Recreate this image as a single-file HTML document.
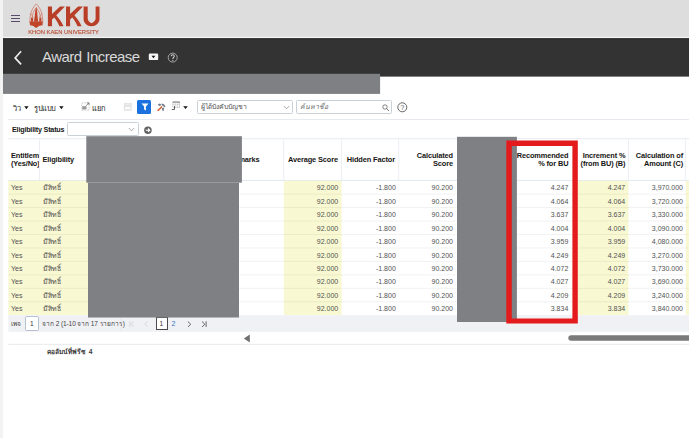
<!DOCTYPE html>
<html><head><meta charset="utf-8">
<style>
*{margin:0;padding:0;box-sizing:border-box}
html,body{width:689px;height:438px;overflow:hidden;background:#fff;font-family:"Liberation Sans",sans-serif}
.a{position:absolute}
.ham{left:10.5px;width:9.8px;height:1.1px;background:#5b4b6b}
.title{left:42px;top:48px;color:#d9d9d9;font-size:15px;letter-spacing:-0.52px;word-spacing:1px;white-space:nowrap}
.tb{font-size:7.5px;color:#262626;white-space:nowrap}
.hd{font-weight:bold;font-size:7.4px;color:#161513;line-height:8.4px;white-space:nowrap;letter-spacing:-0.12px}
.r{text-align:right}
.cell{font-size:7px;color:#525252;white-space:nowrap;line-height:8px}
</style></head><body>
<svg class="a" style="left:0;top:0" width="689" height="438" viewBox="0 0 689 438">
<rect x="0.00" y="0.00" width="3.00" height="438.00" fill="#f3f3f3"/>
<rect x="3.00" y="0.00" width="686.00" height="36.90" fill="#dddddd"/>
<rect x="3.00" y="36.90" width="686.00" height="1.40" fill="#f4f4f4"/>
<rect x="3.00" y="38.30" width="686.00" height="38.30" fill="#333333"/>
<rect x="3.00" y="38.30" width="686.00" height="1.00" fill="#262626"/>
<rect x="8.20" y="119.00" width="680.80" height="1.00" fill="#e6e9ee"/>
<rect x="8.30" y="138.20" width="680.70" height="1.10" fill="#e9edf1"/>
<rect x="8.30" y="179.90" width="680.70" height="1.00" fill="#e3e8ee"/>
<rect x="8.30" y="180.90" width="79.90" height="134.35" fill="#f8f8d2"/>
<rect x="283.80" y="180.90" width="57.80" height="134.35" fill="#f8f8d2"/>
<rect x="578.00" y="180.90" width="50.40" height="134.35" fill="#f8f8d2"/>
<rect x="685.80" y="180.90" width="3.20" height="134.35" fill="#f8f8d2"/>
<rect x="39.00" y="139.30" width="1.00" height="40.60" fill="#ebeef2"/>
<rect x="283.20" y="139.30" width="1.00" height="40.60" fill="#ebeef2"/>
<rect x="340.90" y="139.30" width="1.00" height="40.60" fill="#ebeef2"/>
<rect x="398.20" y="139.30" width="1.00" height="40.60" fill="#ebeef2"/>
<rect x="628.00" y="139.30" width="1.00" height="40.60" fill="#ebeef2"/>
<rect x="684.80" y="139.30" width="1.00" height="40.60" fill="#ebeef2"/>
<rect x="8.30" y="193.61" width="680.70" height="1.00" fill="#000" fill-opacity="0.055"/>
<rect x="8.30" y="207.07" width="680.70" height="1.00" fill="#000" fill-opacity="0.055"/>
<rect x="8.30" y="220.53" width="680.70" height="1.00" fill="#000" fill-opacity="0.055"/>
<rect x="8.30" y="233.99" width="680.70" height="1.00" fill="#000" fill-opacity="0.055"/>
<rect x="8.30" y="247.45" width="680.70" height="1.00" fill="#000" fill-opacity="0.055"/>
<rect x="8.30" y="260.91" width="680.70" height="1.00" fill="#000" fill-opacity="0.055"/>
<rect x="8.30" y="274.37" width="680.70" height="1.00" fill="#000" fill-opacity="0.055"/>
<rect x="8.30" y="287.83" width="680.70" height="1.00" fill="#000" fill-opacity="0.055"/>
<rect x="8.30" y="301.29" width="680.70" height="1.00" fill="#000" fill-opacity="0.055"/>
<rect x="8.30" y="315.25" width="680.70" height="16.55" fill="#f0f1f5"/>
<rect x="120.60" y="315.50" width="0.80" height="16.00" fill="#e2e5ea"/>
<rect x="8.30" y="343.80" width="680.70" height="1.00" fill="#e6e9ee"/>
<rect x="568.3" y="335.2" width="130" height="5.5" rx="2.75" fill="#7a7a7a"/>
<path d="M249.8 334.4 V342.5 L243.8 338.45 Z" fill="#707070"/>
</svg>
<div class="a ham" style="top:14.6px"></div>
<div class="a ham" style="top:18px"></div>
<div class="a ham" style="top:21.2px"></div>
<svg class="a" style="left:0;top:0;will-change:transform" width="110" height="38" viewBox="0 0 110 38">
  <g fill="none" stroke="#cf6a55" stroke-width="0.7">
    <path d="M36.3 3.9 C32.3 8 29.8 13 29.8 23"/>
    <path d="M36.3 3.9 C40.3 8 42.8 13 42.8 23"/>
    <path d="M36.3 7.8 C33.8 10.5 32.2 14 32.2 19"/>
    <path d="M36.3 7.8 C38.8 10.5 40.4 14 40.4 19"/>
    <path d="M30.3 13.5 C32 14.5 33 16.5 33.2 19.5"/>
    <path d="M42.3 13.5 C40.6 14.5 39.6 16.5 39.4 19.5"/>
  </g>
  <g fill="#bf4429">
    <path d="M36.2 6.5 C36.8 9 37.3 12 37.4 14 C37.6 17 37.9 19 38.2 21.8 L34 21.8 C34.3 19 34.7 17 34.9 14 C35.1 12 35.6 9 36.2 6.5 Z"/>
    <path d="M31.1 17.3 C31.8 17.6 32.6 18.2 33 19 L33.2 21.8 L30.9 21.8 Z"/>
    <path d="M41.3 17.3 C40.6 17.6 39.8 18.2 39.4 19 L39.2 21.8 L41.5 21.8 Z"/>
    <path d="M29.8 21.5 L42.7 21.5 L42.6 25.3 L39.5 25.8 L36.1 27.9 L32.9 25.8 L29.9 25.3 Z"/>
  </g>
  <g fill="#b93e27">
    <path d="M47.9 6.5 H52 V14 L60 6.5 H64.9 L56.3 15.3 C59 18.5 61.5 21.5 63.5 26.2 H59.4 C57.8 22.5 56 19.8 54.2 17.5 L52 19.6 V26.2 H47.9 Z"/>
    <path d="M66 6.5 H70.1 V14 L78.1 6.5 H83 L74.4 15.3 C77.1 18.5 79.6 21.5 81.6 26.2 H77.5 C75.9 22.5 74.1 19.8 72.3 17.5 L70.1 19.6 V26.2 H66 Z"/>
    <path d="M83.6 6.5 H87.7 V18.5 C87.7 20.5 89.5 22.5 91.5 23.2 C93.5 22.5 95.6 20.5 95.6 18.5 V6.5 H99.5 V19 C99.5 23 96 26.2 91.5 26.2 C87 26.2 83.6 23 83.6 19 Z"/>
  </g>
  <text x="28.2" y="34.2" font-family="Liberation Sans" font-size="5.9" fill="#b9472f" stroke="#b9472f" stroke-width="0.12" textLength="70.8" lengthAdjust="spacingAndGlyphs">KHON KAEN UNIVERSITY</text>
</svg>
<svg class="a" style="left:13px;top:50px" width="11" height="16" viewBox="0 0 11 16"><path d="M8.1 1.3 L2.1 7.9 L8.1 14.4" stroke="#f0f0f0" stroke-width="1.6" fill="none"/></svg>
<div class="a title">Award Increase</div>
<svg class="a" style="left:140px;top:48px" width="45" height="18" viewBox="140 48 45 18"><rect x="148.8" y="53.6" width="9.4" height="6.5" rx="1.2" fill="#f6f6f6"/><path d="M151.6 55.7 H155.3 L153.45 58.2 Z" fill="#111"/><circle cx="172.7" cy="57.6" r="4.5" stroke="#c8c8c8" stroke-width="0.75" fill="none"/><path d="M171.2 56.2 C171.2 54.3 174.3 54.3 174.3 56.2 C174.3 57.3 172.8 57.5 172.8 59" stroke="#d0d0d0" stroke-width="1.05" fill="none"/><circle cx="172.8" cy="60.4" r="0.6" fill="#c8c8c8"/></svg>

<div class="a tb" style="left:13px;top:101.8px">วิว</div>
<svg class="a" style="left:24.3px;top:105.7px" width="5" height="4" viewBox="0 0 5 4"><path d="M0.2 0.3 H4.6 L2.4 3.3Z" fill="#161513"/></svg>
<div class="a tb" style="left:34px;top:101.8px;letter-spacing:-0.4px">รูปแบบ</div>
<svg class="a" style="left:58.7px;top:105.7px" width="5" height="4" viewBox="0 0 5 4"><path d="M0.2 0.3 H4.6 L2.4 3.3Z" fill="#161513"/></svg>
<svg class="a" style="left:80.5px;top:102.3px" width="9" height="9" viewBox="0 0 9 9"><rect x="0.9" y="0.9" width="7.2" height="7.2" fill="none" stroke="#b5b5b5" stroke-width="0.7" stroke-dasharray="1 0.6"/><rect x="1.2" y="4.2" width="4.3" height="3.2" fill="#9a9a9a"/><path d="M4.8 4 L8 0.9 M6 0.9 H8 V2.9" stroke="#777" stroke-width="0.8" fill="none"/></svg>
<div class="a tb" style="left:92px;top:101.8px;color:#222">แยก</div>
<svg class="a" style="left:122px;top:101px" width="12" height="12" viewBox="122 101 12 12"><path d="M123.9 103.6 Q123.9 102.9 124.6 102.9 H131 Q131.7 102.9 131.7 103.6 V110.7 H123.9 Z" fill="#e2e2e2"/><rect x="125" y="106.8" width="5.6" height="2.6" fill="#fbfbfb"/><rect x="125.2" y="103.6" width="5.2" height="1.6" fill="#ececec"/></svg>
<div class="a" style="left:137.1px;top:99.7px;width:14.2px;height:14.3px;background:#1b72df;border-radius:1.5px"></div>
<svg class="a" style="left:140.5px;top:103px" width="8" height="8" viewBox="0 0 8 8"><path d="M0.5 0.4 H7.5 L4.9 3.6 V7.4 L3.1 6.6 V3.6 Z" fill="#fff"/></svg>
<svg class="a" style="left:156.5px;top:102.5px" width="9" height="8.5" viewBox="0 0 9 8.5"><path d="M0.6 1.8 L2.6 0.5 L4.2 1.5 L3 3.2 Z" fill="#6f7d8c"/><path d="M4.6 0.6 C6.2 0.6 7.8 1.6 8.5 3.6 L7.2 4.2 C6.5 3 5.6 2.3 4.6 2.2 Z" fill="#6f7d8c"/><path d="M4.8 5 L7.2 4.6 L6.8 8 L5.2 7.6 Z" fill="#7a8593"/><path d="M1 7.6 L4.6 3.9" stroke="#d8652a" stroke-width="1.5" stroke-linecap="round"/></svg>
<svg class="a" style="left:168px;top:99px" width="16" height="14" viewBox="168 99 16 14"><rect x="172.9" y="102" width="6.8" height="5.4" fill="none" stroke="#b8b8b8" stroke-width="0.6"/><path d="M172.7 102.1 H179.9" stroke="#6c6c6c" stroke-width="0.9"/><path d="M175.2 102.4 V107.4 M177.5 102.4 V107.4 M172.9 104.7 H179.7" stroke="#c4c4c4" stroke-width="0.55"/><path d="M174.5 106 V109.5 H171.8" stroke="#5a5a5a" stroke-width="0.95" fill="none"/></svg>
<svg class="a" style="left:183px;top:105.9px" width="5" height="4" viewBox="0 0 5 4"><path d="M0.2 0.3 H4.8 L2.5 3.1Z" fill="#161513"/></svg>
<div class="a" style="left:197px;top:99.8px;width:95.5px;height:14.4px;border:1px solid #c9d0d6;border-radius:1.5px;background:#fff"></div>
<div class="a tb" style="left:200.5px;top:101.2px;color:#555;font-size:6.9px">ผู้ได้บังคับบัญชา</div>
<svg class="a" style="left:283px;top:104.5px" width="7" height="5" viewBox="0 0 7 5"><path d="M0.8 1 L3.5 3.8 L6.2 1" stroke="#888" stroke-width="0.7" fill="none"/></svg>
<div class="a" style="left:296px;top:99.8px;width:96px;height:14.4px;border:1px solid #c9d0d6;border-radius:1.5px;background:#fff"></div>
<div class="a tb" style="left:299.5px;top:101.2px;color:#666;font-size:6.9px;font-style:italic">ค้นหาชื่อ</div>
<svg class="a" style="left:382px;top:103.5px" width="8" height="8" viewBox="0 0 8 8"><circle cx="3" cy="3" r="2.2" stroke="#666" stroke-width="0.8" fill="none"/><path d="M4.6 4.6 L7 7" stroke="#666" stroke-width="0.9"/></svg>
<svg class="a" style="left:396.5px;top:101.7px" width="11" height="11" viewBox="0 0 11 11"><circle cx="5.3" cy="5.3" r="4.5" stroke="#555" stroke-width="0.9" fill="none"/><text x="5.3" y="7.9" font-size="6.8" text-anchor="middle" fill="#555" font-family="Liberation Sans">?</text></svg>

<div class="a hd" style="left:12px;top:125.5px;font-size:7.2px;letter-spacing:-0.2px">Eligibility Status</div>
<div class="a" style="left:67px;top:122.4px;width:72px;height:14px;border:1px solid #c9d0d6;border-radius:1.5px;background:#fff"></div>
<svg class="a" style="left:128px;top:127px" width="7" height="5" viewBox="0 0 7 5"><path d="M0.8 1 L3.5 3.8 L6.2 1" stroke="#888" stroke-width="0.7" fill="none"/></svg>
<svg class="a" style="left:140px;top:122px" width="16" height="16" viewBox="140 122 16 16"><circle cx="147.9" cy="130.2" r="3.75" fill="#626262"/><path d="M145.7 130.2 H149.6 M148 128.5 L149.8 130.2 L148 131.9" stroke="#fff" stroke-width="1.1" fill="none"/></svg>

<div class="a cell" style="left:11px;top:184.25px">Yes</div>
<div class="a cell" style="left:42.5px;top:184.25px">มีสิทธิ์</div>
<div class="a cell r" style="left:290px;top:184.25px;width:48.2px">92.000</div>
<div class="a cell r" style="left:350px;top:184.25px;width:45.8px">-1.800</div>
<div class="a cell r" style="left:400px;top:184.25px;width:53px">90.200</div>
<div class="a cell r" style="left:520px;top:184.25px;width:48.3px">4.247</div>
<div class="a cell r" style="left:580px;top:184.25px;width:45.2px">4.247</div>
<div class="a cell r" style="left:630px;top:184.25px;width:53px">3,970.000</div>
<div class="a cell" style="left:11px;top:197.71px">Yes</div>
<div class="a cell" style="left:42.5px;top:197.71px">มีสิทธิ์</div>
<div class="a cell r" style="left:290px;top:197.71px;width:48.2px">92.000</div>
<div class="a cell r" style="left:350px;top:197.71px;width:45.8px">-1.800</div>
<div class="a cell r" style="left:400px;top:197.71px;width:53px">90.200</div>
<div class="a cell r" style="left:520px;top:197.71px;width:48.3px">4.064</div>
<div class="a cell r" style="left:580px;top:197.71px;width:45.2px">4.064</div>
<div class="a cell r" style="left:630px;top:197.71px;width:53px">3,720.000</div>
<div class="a cell" style="left:11px;top:211.17px">Yes</div>
<div class="a cell" style="left:42.5px;top:211.17px">มีสิทธิ์</div>
<div class="a cell r" style="left:290px;top:211.17px;width:48.2px">92.000</div>
<div class="a cell r" style="left:350px;top:211.17px;width:45.8px">-1.800</div>
<div class="a cell r" style="left:400px;top:211.17px;width:53px">90.200</div>
<div class="a cell r" style="left:520px;top:211.17px;width:48.3px">3.637</div>
<div class="a cell r" style="left:580px;top:211.17px;width:45.2px">3.637</div>
<div class="a cell r" style="left:630px;top:211.17px;width:53px">3,330.000</div>
<div class="a cell" style="left:11px;top:224.63px">Yes</div>
<div class="a cell" style="left:42.5px;top:224.63px">มีสิทธิ์</div>
<div class="a cell r" style="left:290px;top:224.63px;width:48.2px">92.000</div>
<div class="a cell r" style="left:350px;top:224.63px;width:45.8px">-1.800</div>
<div class="a cell r" style="left:400px;top:224.63px;width:53px">90.200</div>
<div class="a cell r" style="left:520px;top:224.63px;width:48.3px">4.004</div>
<div class="a cell r" style="left:580px;top:224.63px;width:45.2px">4.004</div>
<div class="a cell r" style="left:630px;top:224.63px;width:53px">3,090.000</div>
<div class="a cell" style="left:11px;top:238.09px">Yes</div>
<div class="a cell" style="left:42.5px;top:238.09px">มีสิทธิ์</div>
<div class="a cell r" style="left:290px;top:238.09px;width:48.2px">92.000</div>
<div class="a cell r" style="left:350px;top:238.09px;width:45.8px">-1.800</div>
<div class="a cell r" style="left:400px;top:238.09px;width:53px">90.200</div>
<div class="a cell r" style="left:520px;top:238.09px;width:48.3px">3.959</div>
<div class="a cell r" style="left:580px;top:238.09px;width:45.2px">3.959</div>
<div class="a cell r" style="left:630px;top:238.09px;width:53px">4,080.000</div>
<div class="a cell" style="left:11px;top:251.55px">Yes</div>
<div class="a cell" style="left:42.5px;top:251.55px">มีสิทธิ์</div>
<div class="a cell r" style="left:290px;top:251.55px;width:48.2px">92.000</div>
<div class="a cell r" style="left:350px;top:251.55px;width:45.8px">-1.800</div>
<div class="a cell r" style="left:400px;top:251.55px;width:53px">90.200</div>
<div class="a cell r" style="left:520px;top:251.55px;width:48.3px">4.249</div>
<div class="a cell r" style="left:580px;top:251.55px;width:45.2px">4.249</div>
<div class="a cell r" style="left:630px;top:251.55px;width:53px">3,270.000</div>
<div class="a cell" style="left:11px;top:265.01px">Yes</div>
<div class="a cell" style="left:42.5px;top:265.01px">มีสิทธิ์</div>
<div class="a cell r" style="left:290px;top:265.01px;width:48.2px">92.000</div>
<div class="a cell r" style="left:350px;top:265.01px;width:45.8px">-1.800</div>
<div class="a cell r" style="left:400px;top:265.01px;width:53px">90.200</div>
<div class="a cell r" style="left:520px;top:265.01px;width:48.3px">4.072</div>
<div class="a cell r" style="left:580px;top:265.01px;width:45.2px">4.072</div>
<div class="a cell r" style="left:630px;top:265.01px;width:53px">3,730.000</div>
<div class="a cell" style="left:11px;top:278.47px">Yes</div>
<div class="a cell" style="left:42.5px;top:278.47px">มีสิทธิ์</div>
<div class="a cell r" style="left:290px;top:278.47px;width:48.2px">92.000</div>
<div class="a cell r" style="left:350px;top:278.47px;width:45.8px">-1.800</div>
<div class="a cell r" style="left:400px;top:278.47px;width:53px">90.200</div>
<div class="a cell r" style="left:520px;top:278.47px;width:48.3px">4.027</div>
<div class="a cell r" style="left:580px;top:278.47px;width:45.2px">4.027</div>
<div class="a cell r" style="left:630px;top:278.47px;width:53px">3,690.000</div>
<div class="a cell" style="left:11px;top:291.93px">Yes</div>
<div class="a cell" style="left:42.5px;top:291.93px">มีสิทธิ์</div>
<div class="a cell r" style="left:290px;top:291.93px;width:48.2px">92.000</div>
<div class="a cell r" style="left:350px;top:291.93px;width:45.8px">-1.800</div>
<div class="a cell r" style="left:400px;top:291.93px;width:53px">90.200</div>
<div class="a cell r" style="left:520px;top:291.93px;width:48.3px">4.209</div>
<div class="a cell r" style="left:580px;top:291.93px;width:45.2px">4.209</div>
<div class="a cell r" style="left:630px;top:291.93px;width:53px">3,240.000</div>
<div class="a cell" style="left:11px;top:305.39px">Yes</div>
<div class="a cell" style="left:42.5px;top:305.39px">มีสิทธิ์</div>
<div class="a cell r" style="left:290px;top:305.39px;width:48.2px">92.000</div>
<div class="a cell r" style="left:350px;top:305.39px;width:45.8px">-1.800</div>
<div class="a cell r" style="left:400px;top:305.39px;width:53px">90.200</div>
<div class="a cell r" style="left:520px;top:305.39px;width:48.3px">3.834</div>
<div class="a cell r" style="left:580px;top:305.39px;width:45.2px">3.834</div>
<div class="a cell r" style="left:630px;top:305.39px;width:53px">3,840.000</div>

<div class="a hd" style="left:11px;top:151.8px;width:28.4px;overflow:hidden">Entitlement<br>(Yes/No)</div>
<div class="a hd" style="left:42.5px;top:156px">Eligibility</div>
<div class="a hd" style="left:220px;top:156px;width:39.6px;text-align:right">Remarks</div>
<div class="a hd" style="left:288px;top:156px">Average Score</div>
<div class="a hd" style="left:346.8px;top:156px">Hidden Factor</div>
<div class="a hd" style="left:398px;top:151.8px;width:55px;text-align:right">Calculated<br>Score</div>
<div class="a hd" style="left:500px;top:151.8px;width:68.4px;text-align:right">Recommended<br>% for BU</div>
<div class="a hd" style="left:570px;top:151.8px;width:55.4px;text-align:right">Increment %<br>(from BU) (B)</div>
<div class="a hd" style="left:628px;top:151.8px;width:55px;text-align:right">Calculation of<br>Amount (C)</div>

<div class="a cell" style="left:10.8px;top:319.6px;color:#444;font-size:6.6px">เพจ</div>
<div class="a" style="left:24.8px;top:316.4px;width:14.3px;height:14.4px;border:1px solid #b3c1ce;border-radius:1.5px;background:#fff"></div>
<div class="a cell" style="left:30px;top:319.8px;color:#333;font-size:6.6px">1</div>
<div class="a cell" style="left:42.3px;top:319.8px;color:#444;font-size:6.6px;letter-spacing:-0.12px">จาก 2 (1-10 จาก 17 รายการ)</div>
<svg class="a" style="left:128.5px;top:320.7px" width="6" height="6.5" viewBox="0 0 6 6.5"><path d="M0.9 0.3 V6.2 M4.9 0.5 L2 3.25 L4.9 6" stroke="#cfcfcf" stroke-width="0.8" fill="none"/></svg>
<svg class="a" style="left:143.8px;top:320.7px" width="4.5" height="6.5" viewBox="0 0 4.5 6.5"><path d="M3.6 0.5 L0.8 3.25 L3.6 6" stroke="#cfcfcf" stroke-width="0.8" fill="none"/></svg>
<div class="a" style="left:155.5px;top:317.3px;width:12.1px;height:12.4px;border:0.9px solid #4a4a4a;background:#fff"></div>
<div class="a cell" style="left:159.6px;top:319.6px;color:#333;font-size:6.6px">1</div>
<div class="a cell" style="left:171.4px;top:320.3px;color:#2f78c4;font-size:7px">2</div>
<svg class="a" style="left:186.8px;top:320.7px" width="4.5" height="6.5" viewBox="0 0 4.5 6.5"><path d="M0.9 0.5 L3.7 3.25 L0.9 6" stroke="#4c4c4c" stroke-width="0.85" fill="none"/></svg>
<svg class="a" style="left:201.2px;top:320.7px" width="6" height="6.5" viewBox="0 0 6 6.5"><path d="M5.1 0.3 V6.2 M1 0.5 L3.9 3.25 L1 6" stroke="#4c4c4c" stroke-width="0.85" fill="none"/></svg>
<div class="a hd" style="left:47px;top:348.4px;font-size:6.6px;color:#3a3a3a;letter-spacing:0">คอลัมน์ที่ฟรีซ&nbsp; 4</div>

<svg class="a" style="left:0;top:0" width="689" height="438" viewBox="0 0 689 438">
<rect x="3.00" y="73.80" width="377.10" height="20.10" fill="#7f8084"/>
<rect x="86.30" y="136.20" width="155.60" height="46.50" fill="#7f8084"/>
<rect x="88.00" y="182.70" width="151.00" height="134.80" fill="#7f8084"/>
<rect x="457.00" y="136.80" width="59.90" height="185.20" fill="#7f8084"/>
<path fill-rule="evenodd" fill="#e31b1d" d="M506.3 140.4 H577.8 V323.5 H506.3 Z M511.8 146 V318.5 H572.4 V146 Z"/>
</svg>
</body></html>
